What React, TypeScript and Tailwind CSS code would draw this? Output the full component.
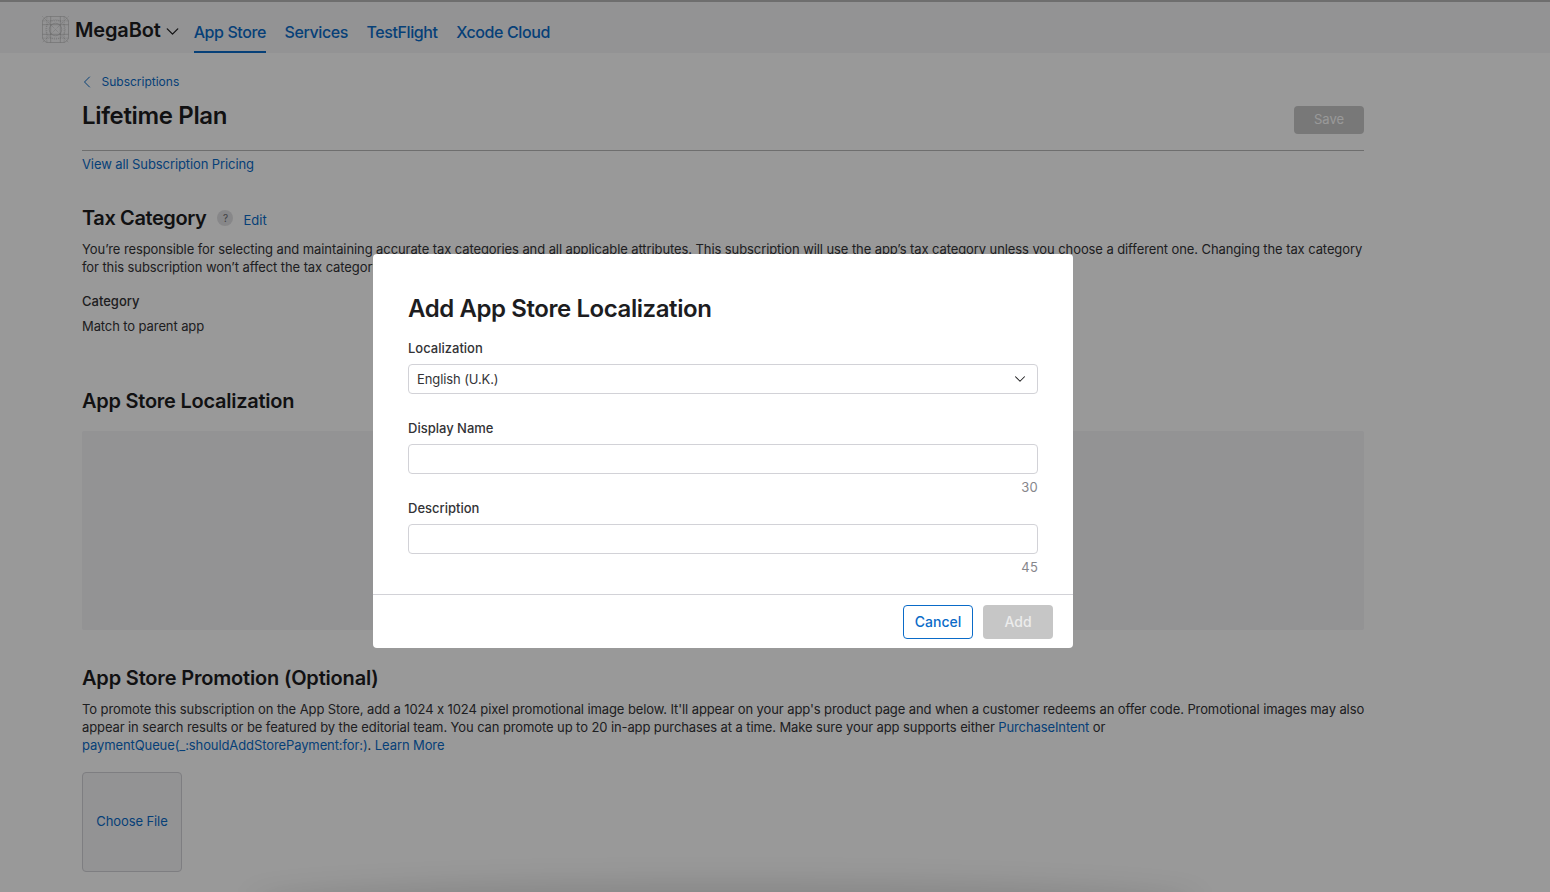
import React from 'react';
import { ChevronDown, ChevronLeft } from 'lucide-react';

const navItems = ['App Store', 'Services', 'TestFlight', 'Xcode Cloud'];

const AppIconGrid: React.FC = () => (
  <svg className="mt-[4px]" width="27" height="27" viewBox="0 0 28 28" fill="none" stroke="#a6a6a6" strokeWidth="0.5">
    <rect x="0.5" y="0.5" width="27" height="27" rx="6" />
    <circle cx="14" cy="14" r="6.5" />
    <circle cx="14" cy="14" r="10" strokeDasharray="1 1" />
    <path d="M9 0.5V27.5M19 0.5V27.5M0.5 9H27.5M0.5 19H27.5" />
    <path d="M5 0.5V27.5M23 0.5V27.5M0.5 5H27.5M0.5 23H27.5" strokeDasharray="1 1" />
    <path d="M0.5 0.5L27.5 27.5M27.5 0.5L0.5 27.5" strokeDasharray="1 1" />
  </svg>
);

const Field: React.FC<{ label: string; count: string }> = ({ label, count }) => (
  <div>
    <div className="h-[18px] text-[13px] leading-[18px] font-medium tracking-normal text-[#333336]">{label}</div>
    <div className="mt-[7px] h-[30px] rounded-[4px] border border-[#d2d2d7] bg-white" />
    <div className="mt-[4px] h-[18px] text-right text-[13px] leading-[18px] tracking-[0.2px] text-[#86868b]">{count}</div>
  </div>
);

const App: React.FC = () => {
  return (
    <div
      className="relative h-[892px] w-full overflow-hidden border-t-2 border-[#6e6e6e] bg-white text-[13px] leading-[18px] tracking-[-0.1px] text-[#333336] [font-feature-settings:'calt'_0]"
      style={{ fontFamily: 'Inter, "Noto Sans", sans-serif' }}
    >
      <header className="flex h-[51px] items-center bg-[#f5f5f7] pl-[42px]">
        <AppIconGrid />
        <span className="ml-[6px] pt-[5px] text-[20px] leading-[24px] font-semibold tracking-[-0.15px] text-[#1d1d1f]">MegaBot</span>
        <ChevronDown className="mt-[8px] ml-[1px] text-[#1d1d1f]" size={21} strokeWidth={1.5} />
        <nav className="ml-[11px] flex h-full gap-[18.5px]">
          {navItems.map((item, i) => (
            <a
              key={item}
              className={`flex h-full items-center border-b-2 pt-[10px] text-[16px] font-medium tracking-[-0.4px] text-[#0a6bc8] ${
                i === 0 ? 'border-[#0a6bc8]' : 'border-transparent'
              }`}
            >
              {item}
            </a>
          ))}
        </nav>
      </header>

      <main className="ml-[82px] w-[1282px]">
        <div className="mt-[19px] flex h-[20px] items-center text-[12px] tracking-normal text-[#0a6bc8]">
          <ChevronLeft className="ml-[-5px]" size={20} strokeWidth={1.2} />
          <span className="ml-[4.5px]">Subscriptions</span>
        </div>
        <div className="flex h-[59px] items-start justify-between border-b border-[#b8b8b8]">
          <h1 className="mt-[9px] text-[24px] leading-[30px] font-semibold tracking-[-0.35px] text-[#1d1d1f]">Lifetime Plan</h1>
          <button className="mt-[14px] h-[28px] w-[70px] rounded-[4px] bg-[#c8c8c8] pb-[2px] text-[13px] tracking-normal text-white">Save</button>
        </div>
        <a className="mt-[4px] block text-[#0a6bc8]">View all Subscription Pricing</a>

        <div className="mt-[30px] flex h-[30px] items-center">
          <h2 className="text-[20px] font-semibold tracking-[-0.4px] text-[#1d1d1f]">Tax Category</h2>
          <span className="ml-[11px] flex h-[16px] w-[16px] items-center justify-center rounded-full bg-[#e2e2e4] text-[10px] text-[#6e6e73]">?</span>
          <a className="mt-[3px] ml-[10px] tracking-normal text-[#0a6bc8]">Edit</a>
        </div>
        <p className="mt-[7px] tracking-[-0.09px]">
          You’re responsible for selecting and maintaining accurate tax categories and all applicable attributes. This subscription will use the app’s tax category unless you choose a different one. Changing the tax category for this subscription won’t affect the tax category of the app.
        </p>
        <div className="mt-[16px] font-medium tracking-normal">Category</div>
        <div className="mt-[7px]">Match to parent app</div>

        <h2 className="mt-[51px] text-[20px] leading-[30px] font-semibold tracking-[-0.25px] text-[#1d1d1f]">App Store Localization</h2>
        <div className="mt-[15px] h-[199px] rounded-[2px] bg-[#f5f5f7]" />

        <h2 className="mt-[33px] text-[20px] leading-[30px] font-semibold tracking-[-0.18px] text-[#1d1d1f]">App Store Promotion (Optional)</h2>
        <p className="mt-[7px] mr-[-4px] tracking-[-0.1px]">
          To promote this subscription on the App Store, add a 1024 x 1024 pixel promotional image below. It'll appear on your app's product page and when a customer redeems an offer code. Promotional images may also appear in search results or be featured by the editorial team. You can promote up to 20 in-app purchases at a time. Make sure your app supports either{' '}
          <a className="text-[#0a6bc8]">PurchaseIntent</a> or{' '}
          <a className="text-[#0a6bc8]">paymentQueue(_:shouldAddStorePayment:for:)</a>.{' '}
          <a className="text-[#0a6bc8]">Learn More</a>
        </p>
        <div className="mt-[18px] flex h-[100px] w-[100px] items-center justify-center rounded-[4px] border border-[#d2d2d7] bg-[#f5f5f7] pb-[2px] text-[#0a6bc8]">
          Choose File
        </div>
      </main>

      {/* dim layer and the dialog on top of the page */}
      <div className="absolute inset-0 top-[-2px] bg-black/40" />
      <div className="absolute bottom-[-30px] left-[250px] h-[42px] w-[950px] rounded-[50%] bg-black/10 blur-[12px]" />
      <div className="absolute top-[252px] left-[373px] flex h-[394px] w-[700px] flex-col rounded-[4px] bg-white">
        <div className="px-[35px] pt-[40px]">
          <h3 className="text-[24px] leading-[30px] font-semibold tracking-[-0.42px] text-[#1d1d1f]">Add App Store Localization</h3>
          <div className="mt-[15px]">
            <div className="h-[18px] font-medium tracking-normal text-[#333336]">Localization</div>
            <div className="mt-[7px] flex h-[30px] items-center justify-between rounded-[4px] border border-[#d2d2d7] pr-[8px] pl-[8px]">
              <span className="pb-[1px]">English (U.K.)</span>
              <ChevronDown size={18} strokeWidth={1.4} className="text-[#1d1d1f]" />
            </div>
          </div>
          <div className="mt-[25px]">
            <Field label="Display Name" count="30" />
          </div>
          <div className="mt-[3px]">
            <Field label="Description" count="45" />
          </div>
        </div>
        <div className="mt-[18px] flex flex-1 items-start justify-end gap-[10px] border-t border-[#d2d2d7] pt-[10px] pr-[20px]">
          <button className="h-[34px] w-[70px] rounded-[4px] border border-[#0a6bc8] text-[14px] font-medium tracking-normal text-[#0a6bc8]">Cancel</button>
          <button className="h-[34px] w-[70px] rounded-[4px] bg-[#c6c6c6] text-[14px] font-medium tracking-normal text-[#ececec]">Add</button>
        </div>
      </div>
    </div>
  );
};

export default App;
